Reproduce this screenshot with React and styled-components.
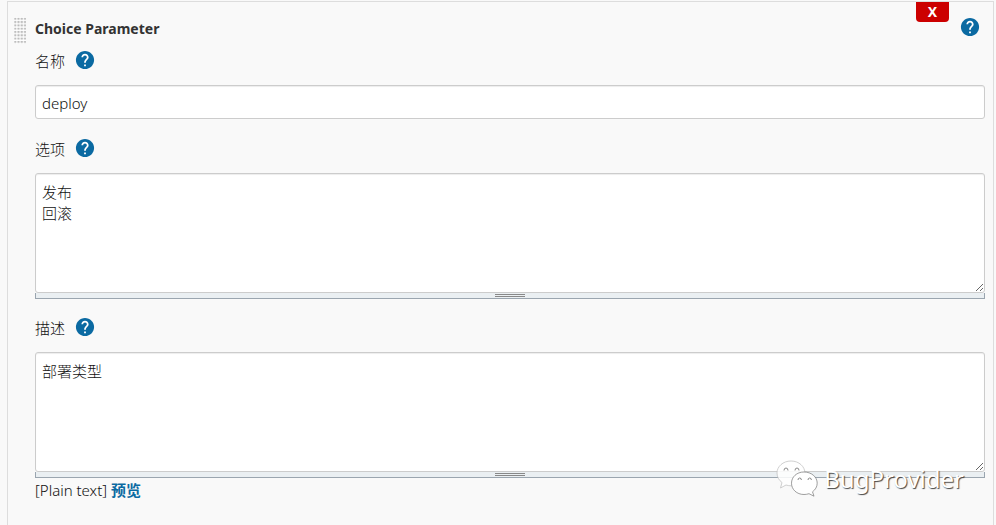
import React from 'react';
import styled, { createGlobalStyle } from 'styled-components';

const GlobalStyle = createGlobalStyle`
  *, *::before {
    box-sizing: border-box;
  }

  body {
    margin: 0;
    background: #f9f9f9;
    color: #111;
    font-family: "Noto Sans", "Noto Sans CJK SC", sans-serif;
    font-size: 15px;
    font-weight: 300;
    line-height: 22px;
  }
`;

const Page = styled.main`
  position: relative;
  padding: 1px 2px 0 7px;
`;

const Panel = styled.form`
  display: flex;
  gap: 9px;
  min-height: 100vh;
  padding: 0 8px 24px 6px;
  border: 1px solid #ddd;
`;

const DragHandle = styled.svg`
  flex: none;
  width: 12px;
  height: 27px;
  margin-top: 15px;
  cursor: move;
`;

const Content = styled.div`
  flex: 1;
  min-width: 0;
`;

const Header = styled.header`
  display: flex;
  align-items: flex-start;
  height: 48px;
`;

const Title = styled.h2`
  flex: 1;
  margin: 16px 0 0;
  color: #333;
  font-size: 14px;
  line-height: 22px;
  font-weight: 700;
`;

const DeleteButton = styled.button`
  width: 33px;
  height: 20px;
  margin-right: 11px;
  padding: 0;
  border: 0;
  border-radius: 0 0 4px 4px;
  background: #c00;
  color: #fff;
  font: 700 14px/20px "Noto Sans", sans-serif;
  cursor: pointer;
`;

const HelpLink = styled.a`
  display: block;
  width: 20px;
  height: 20px;
  margin-top: ${({ $top }) => ($top ? '15px' : '0')};
  margin-right: ${({ $top }) => ($top ? '5px' : '0')};

  svg {
    display: block;
  }
`;

const LabelRow = styled.div`
  display: flex;
  gap: 10px;
  height: 35px;
`;

const inputStyles = `
  display: block;
  width: 100%;
  border: 1px solid #ccc;
  border-radius: 3px;
  background: #fff;
  box-shadow: inset 0 1px 1px rgba(0, 0, 0, 0.075);
  color: #111;
  font: inherit;
  outline: 0;
`;

const Input = styled.input`
  ${inputStyles}
  height: 34px;
  margin-bottom: 19px;
  padding: 7px 6px 5px;
`;

const TextArea = styled.textarea`
  ${inputStyles}
  height: 120px;
  padding: 8px 6px;
  line-height: 21px;
  resize: vertical;
`;

const ResizeBar = styled.div`
  display: flex;
  justify-content: center;
  height: 6px;
  margin-bottom: 18px;
  padding-top: 1px;
  border: solid #9aa5af;
  border-width: 0 1px 1px;
  background: #eaeff2;
  cursor: s-resize;

  &::before {
    content: "";
    width: 30px;
    height: 3px;
    border: solid #888;
    border-width: 1px 0;
  }
`;

const Preview = styled.a`
  color: #0b6aa2;
  font-weight: 700;
  text-decoration: none;
`;

const Format = styled.div`
  margin-top: -17px;
`;

const Watermark = styled.div`
  position: absolute;
  top: 459px;
  right: 32px;
  display: flex;
  gap: 6px;
  color: #fff;
  font-size: 24px;
  font-weight: 400;
  line-height: 40px;
  text-shadow: 1px 1px 1px #444;
  pointer-events: none;
`;

const HelpIcon = () => (
  <svg width="20" height="20" viewBox="1 1 22 22" aria-hidden="true">
    <path
      fill="#0b6aa2"
      d="M12 2C6.48 2 2 6.48 2 12s4.48 10 10 10 10-4.48 10-10S17.52 2 12 2z"
    />
    <path
      fill="#fff"
      d="M13 19h-2v-2h2v2zm2.07-7.75-.9.92C13.45 12.9 13 13.5 13 15h-2v-.5c0-1.1.45-2.1 1.17-2.83l1.24-1.26c.37-.36.59-.86.59-1.41 0-1.1-.9-2-2-2s-2 .9-2 2H8c0-2.21 1.79-4 4-4s4 1.79 4 4c0 .88-.36 1.68-.93 2.25z"
    />
  </svg>
);

const Help = ({ label, $top }) => (
  <HelpLink href="#help" aria-label={`Help: ${label}`} $top={$top}>
    <HelpIcon />
  </HelpLink>
);

const Grip = () => (
  <DragHandle viewBox="0 0 12 27" aria-hidden="true">
    <defs>
      <pattern id="grip" width="3.2" height="3.3" patternUnits="userSpaceOnUse">
        <rect x="0.3" y="0.8" width="2" height="2" fill="#bbb" />
      </pattern>
    </defs>
    <rect width="12" height="27" fill="#fff" />
    <rect width="12" height="27" fill="url(#grip)" />
  </DragHandle>
);

const ChatLogo = () => (
  <svg width="42" height="38" viewBox="0 0 42 38" aria-hidden="true">
    <g fill="#fff" strokeWidth="0.7">
      <path
        fillOpacity="0.85"
        stroke="#bbb"
        d="M15 2C7 2 1 7.5 1 14c0 4 2 7.3 5 9.5L4.5 29l5.5-3c1.8.6 3.5.8 5.5.8C23 27 29 21 29 14.5 29 7.5 23 2 15 2z"
      />
      <path
        stroke="#777"
        d="M28 13c-7.3 0-12.5 5-12.5 11.2S20.7 35.5 28 35.5c1.7 0 3.4-.3 5-.8l5 2.5-1.5-4.4c2.8-2 4.7-5 4.7-8.6C41.2 18 35.5 13 28 13z"
      />
    </g>
    <path
      fill="none"
      stroke="#888"
      d="M8 11.5q0-2.5 2-2.5t2 2.500M19 11.5q0-2.5 2-2.5t2 2.5M22 21q0-2 1.7-2t1.7 2M32 21q0-2 1.7-2t1.7 2"
    />
  </svg>
);

const App = () => (
  <>
    <GlobalStyle />
    <Page>
      <Panel>
        <Grip />
        <Content>
          <Header>
            <Title>Choice Parameter</Title>
            <DeleteButton type="button" aria-label="Delete">X</DeleteButton>
            <Help label="Choice Parameter" $top />
          </Header>
          <LabelRow>
            <label htmlFor="name">名称</label>
            <Help label="名称" />
          </LabelRow>
          <Input id="name" defaultValue="deploy" />
          <LabelRow>
            <label htmlFor="choices">选项</label>
            <Help label="选项" />
          </LabelRow>
          <TextArea id="choices" defaultValue={'发布\n回滚'} />
          <ResizeBar />
          <LabelRow>
            <label htmlFor="description">描述</label>
            <Help label="描述" />
          </LabelRow>
          <TextArea id="description" defaultValue="部署类型" />
          <ResizeBar />
          <Format>
            [Plain text] <Preview href="#preview">预览</Preview>
          </Format>
        </Content>
      </Panel>
      <Watermark>
        <ChatLogo />
        <span>BugProvider</span>
      </Watermark>
    </Page>
  </>
);

export default App;
